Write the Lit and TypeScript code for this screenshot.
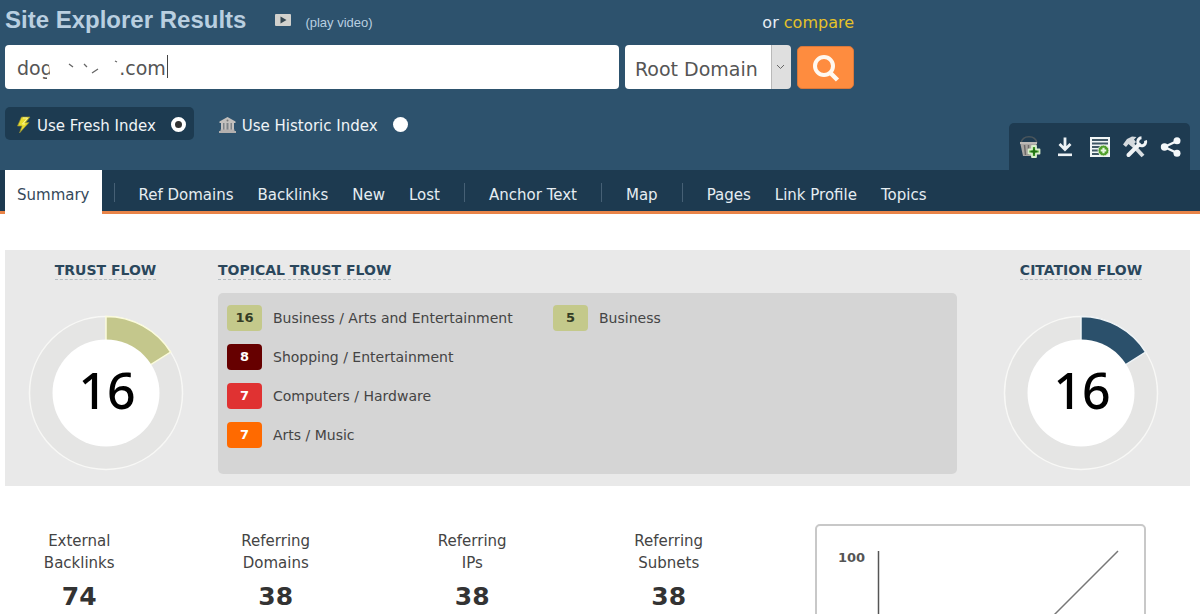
import { LitElement, html, css, svg } from "lit";
import { customElement, property } from "lit/decorators.js";

const topics = [
  { score: 16, name: "Business / Arts and Entertainment", tone: "sage" },
  { score: 8, name: "Shopping / Entertainment", tone: "maroon" },
  { score: 7, name: "Computers / Hardware", tone: "red" },
  { score: 7, name: "Arts / Music", tone: "orange" },
  { score: 5, name: "Business", tone: "sage" },
];

const stats = [
  { top: "External", bottom: "Backlinks", value: 74 },
  { top: "Referring", bottom: "Domains", value: 38 },
  { top: "Referring", bottom: "IPs", value: 38 },
  { top: "Referring", bottom: "Subnets", value: 38 },
];

const tabGroups = [
  ["Summary"],
  ["Ref Domains", "Backlinks", "New", "Lost"],
  ["Anchor Text"],
  ["Map"],
  ["Pages", "Link Profile", "Topics"],
];

const plusBadge = svg`
  <path d="M13 10h4v3.500h3.500v4H17V21h-4v-3.500H9.500v-4H13z" fill="#3f9a25" stroke="#d9efcb" stroke-width="1.800" stroke-linejoin="round"/>
  <path d="M15 12.500v6M12 15.500h6" stroke="#1f6d12" stroke-width="1.600"/>`;

const tools = [
  {
    label: "Add to bucket",
    icon: svg`
      <path d="M2 7C3 2 7 .800 10 .800S17 2 18 7" fill="none" stroke="#4a555c" stroke-width="1.400"/>
      <path d="M1 6h17l-2.500 14H4z" fill="#a9a5a2"/>
      <path d="M1 6h17v2H1z" fill="#bdb9b6"/>
      <path d="M5.500 9l1 10M9.500 9v10M14 9l-.500 5" stroke="#6d6a69" stroke-width="1.500"/>
      ${plusBadge}`,
  },
  {
    label: "Download",
    icon: svg`
      <path d="M11 1.500v11M5.500 8l5.500 5.500L16.500 8" fill="none" stroke="#eef3f6" stroke-width="2.800"/>
      <path d="M4 18.800h14" stroke="#eef3f6" stroke-width="2.600"/>`,
  },
  {
    label: "Create report",
    icon: svg`
      <path d="M1 1h20v20H1z" fill="#f1f5f6"/>
      <path d="M3 4h16M3 7.500h16M3 11h9M3 14.500h7M3 18h7" stroke="#405866" stroke-width="1.800"/>
      <circle cx="14.500" cy="14.500" r="5.400" fill="#4f9f2b" stroke="#d7ebcb"/>
      <path d="M14.500 11.700v5.600M11.700 14.500h5.600" stroke="#e7f5df" stroke-width="2.200"/>`,
  },
  {
    label: "Tools",
    icon: svg`
      <path d="M7 7l12 13" stroke="#d9dee2" stroke-width="4"/>
      <path d="M-1 8.500l4-5.500L8 .500l4.500.500L10 3.500l2 2.500L7.500 10.500 4.500 8 2 11z" fill="#d5dade"/>
      <path d="M15 8.500L4.500 19" stroke="#f1f4f6" stroke-width="4" stroke-linecap="round"/>
      <path d="M21.500 4.500A4 4 0 1 1 17.500 1.800" fill="none" stroke="#f1f4f6" stroke-width="3"/>`,
  },
  {
    label: "Share",
    icon: svg`
      <path d="M19 4.500L5.500 11 19 17.500" fill="none" stroke="#f4f8fa" stroke-width="2.400"/>
      <circle cx="18" cy="4.800" r="3.500" fill="#f4f8fa"/>
      <circle cx="5.500" cy="11" r="3.700" fill="#f4f8fa"/>
      <circle cx="18" cy="17.200" r="3.500" fill="#f4f8fa"/>`,
  },
];

@customElement("flow-dial")
class FlowDial extends LitElement {
  @property({ type: Number }) score = 0;
  @property() color = "#c4c78c";
  @property() edge = "#fbfbdc";

  static styles = css`
    :host { display: block; width: 156px; }
    svg { display: block; width: 100%; }
    text { font: 500 50px "Noto Sans", "Open Sans", sans-serif; text-anchor: middle; }
  `;

  private point(radius: number) {
    const angle = (this.score / 100) * Math.PI * 2;
    return `${78 + radius * Math.sin(angle)} ${78 - radius * Math.cos(angle)}`;
  }

  render() {
    return html`
      <svg viewBox="0 0 156 156" role="img" aria-label="Score ${this.score}">
        <circle cx="78" cy="78" r="76.500" fill="#e5e5e4" stroke="#f8f8f6" stroke-width="1.500"/>
        <path d="M78 1.500A76.500 76.500 0 0 1 ${this.point(76.5)}L78 78Z"
          fill=${this.color} stroke=${this.edge} stroke-width="1.500"/>
        <circle cx="78" cy="78" r="53.500" fill="#fff"/>
        <text x="79" y="94">${this.score}</text>
      </svg>`;
  }
}

@customElement("app-root")
class AppRoot extends LitElement {
  static styles = css`
    :host {
      display: block;
      height: 100vh;
      overflow-y: auto;
      scrollbar-width: none;
      background: #fff;
      color: #444;
      font: 15px/22px "DejaVu Sans", Verdana, sans-serif;
    }
    * { box-sizing: border-box; }
    a { color: inherit; text-decoration: none; }
    h1, h2, p, dl, dd, dt, ul { margin: 0; padding: 0; font-weight: normal; }
    button { border: 0; padding: 0; background: none; cursor: pointer; }
    svg { display: block; overflow: visible; }

    header {
      display: flex;
      justify-content: space-between;
      align-items: flex-end;
      padding: 0 10px 0 5px;
      background: #2d526d;
      color: #f0f4f7;
    }
    .search { flex: 0 1 849px; padding-bottom: 30px; }
    .title-row { display: flex; align-items: center; height: 45px; padding-bottom: 6px; color: #b9cfe0; }
    .title-row h1 { font: bold 24px/30px "Liberation Sans", Arial, sans-serif; }
    .video {
      display: flex;
      align-items: center;
      gap: 13px;
      margin-left: 28px;
      font: 13px/20px "Liberation Sans", Arial, sans-serif;
    }
    .video span { padding-top: 6px; }
    .compare { margin-left: auto; padding-top: 6px; font-size: 16px; color: #e8eff4; }
    .compare a { color: #e6c229; }
    .search-row { display: flex; gap: 6px; height: 44px; }
    .domain { position: relative; flex: 1; }
    .domain input {
      width: 100%;
      height: 44px;
      padding: 2px 12px 0;
      border: 0;
      border-radius: 4px;
      background: #fff;
      color: #555;
      font: 19px "DejaVu Sans", Verdana, sans-serif;
      outline: none;
    }
    .redaction { position: absolute; left: 42px; top: 8px; }
    .scope { position: relative; width: 166px; }
    .scope select {
      appearance: none;
      width: 100%;
      height: 44px;
      padding: 4px 20px 0 10px;
      border: 0;
      border-radius: 4px;
      background: linear-gradient(to left, #dfdfdf 19px, #b9b9b9 19px, #b9b9b9 20px, #fff 20px);
      color: #555;
      font: 19px "DejaVu Sans", Verdana, sans-serif;
    }
    .scope svg { position: absolute; right: 6px; top: 18px; pointer-events: none; }
    .go {
      display: grid;
      place-items: center;
      width: 57px;
      margin-top: 1px;
      border: 1px solid #d9783b;
      border-radius: 5px;
      background: #fe8c3f;
    }
    .indexes { display: flex; gap: 14px; margin-top: 18px; }
    .indexes label {
      display: flex;
      align-items: center;
      height: 33px;
      padding: 5px 8px 0 11px;
      border-radius: 5px;
    }
    .indexes label.on { background: #1d3b51; }
    .indexes svg { margin: 0 6px 2px 0; }
    .indexes input {
      appearance: none;
      width: 15px;
      height: 15px;
      margin: 0 0 3px 15px;
      border-radius: 50%;
      background: #fff;
    }
    .indexes input:checked { border: 4px solid #fff; background: #333; }
    .tools {
      display: flex;
      gap: 11px;
      height: 47px;
      padding: 1px 8px 0 9px;
      border-radius: 5px 5px 0 0;
      background: #1e3b51;
    }
    .tools button { display: grid; place-items: center; width: 24px; }

    nav {
      display: flex;
      height: 44px;
      padding-left: 5px;
      border-bottom: 3px solid #e98448;
      background: #1d3a50;
      color: #e6edf2;
    }
    .group { display: flex; }
    .group + .group::before {
      content: "";
      width: 1px;
      height: 19px;
      margin: 13px 12px 0;
      background: #466075;
    }
    .group a { height: 44px; padding: 14px 12px 0; }
    .group a.active { background: #fff; color: #35495a; }

    .flows {
      display: grid;
      grid-template-columns: 201px 1fr 218px;
      margin: 36px 10px 0 5px;
      padding: 12px 0;
      background: #e9e9e9;
    }
    .flow { display: flex; flex-direction: column; align-items: center; }
    h2 {
      width: fit-content;
      border-bottom: 1px dashed #b4bcc1;
      color: #2a475c;
      font-size: 14px;
      font-weight: bold;
      line-height: 17px;
    }
    flow-dial { margin-top: 35px; }
    .topical { margin: 0 15px 0 12px; }
    .topics {
      display: grid;
      grid-template-rows: repeat(4, 26px);
      grid-auto-flow: column;
      grid-auto-columns: 326px;
      row-gap: 13px;
      margin-top: 13px;
      padding: 12px 9px 26px;
      border-radius: 5px;
      background: #d5d5d5;
      list-style: none;
      font-size: 14px;
    }
    .topics li { display: flex; align-items: center; gap: 11px; white-space: nowrap; }
    .badge {
      width: 35px;
      border-radius: 4px;
      color: #fff;
      font-size: 13px;
      font-weight: bold;
      line-height: 26px;
      text-align: center;
    }
    .sage { background: #c4c98b; color: #343c24; }
    .maroon { background: #660000; }
    .red { background: #e03232; }
    .orange { background: #ff6a00; }

    .lower { display: flex; justify-content: space-between; align-items: flex-start; padding: 38px 54px 0 0; }
    .stats { display: grid; grid-template-columns: repeat(4, 1fr); flex: 0 1 786px; margin: 6px 0 0 -19px; text-align: center; }
    .stats dd { margin-top: 6px; color: #333; font-size: 25px; font-weight: bold; line-height: 34px; }
    .chart { width: 331px; border: 2px solid #c8c8c8; border-radius: 5px; }
    .chart text { font: bold 13px "DejaVu Sans", Verdana, sans-serif; fill: #555; }
  `;

  render() {
    return html`
      <header>
        <form class="search" @submit=${(e: Event) => e.preventDefault()}>
          <div class="title-row">
            <h1>Site Explorer Results</h1>
            <a class="video" href="#video">
              <svg width="18" height="14" viewBox="0 0 18 14">
                <rect x="1" y="1" width="16" height="12" rx="1" fill="#d1d1cd"/>
                <path d="M6.500 3.500L12.500 7l-6 3.500z" fill="#344650"/>
              </svg>
              <span>(play video)</span>
            </a>
            <p class="compare">or <a href="#compare">compare</a></p>
          </div>
          <div class="search-row">
            <div class="domain">
              <input type="text" aria-label="Domain" .value=${"dog" + " ".repeat(11) + ".com"}>
              <svg class="redaction" width="124" height="30" viewBox="0 0 124 30" aria-hidden="true">
                <path d="M4 0H72V30H0V24L3 21 2 12z" fill="#fff"/>
                <path d="M22 11l4 3M37 11l3 3M45 20l6-4M68 8l2 1" stroke="#666" stroke-width="1.300"/>
                <path d="M120.500 2v23" stroke="#444"/>
              </svg>
            </div>
            <div class="scope">
              <select aria-label="Scope"><option>Root Domain</option></select>
              <svg width="9" height="8" viewBox="0 0 9 8"><path d="M1 2l3.500 3.500L8 2" fill="none" stroke="#666"/></svg>
            </div>
            <button class="go" aria-label="Search">
              <svg width="30" height="30" viewBox="0 0 30 30">
                <circle cx="13" cy="13" r="9" fill="none" stroke="#fff8f0" stroke-width="4"/>
                <path d="M19 19.500L26.500 27" stroke="#fff8f0" stroke-width="4.500"/>
              </svg>
            </button>
          </div>
          <div class="indexes">
            <label class="on">
              <svg width="15" height="18" viewBox="0 0 15 18">
                <path d="M5.500 1H14L9.500 6.500H13L3.500 17 6 10H1.500z" fill="#e9dc2d" stroke="#8f8b35" stroke-width=".700"/>
                <path d="M7 2h4.500L6.500 8H9" fill="none" stroke="#fbf59a"/>
              </svg>
              Use Fresh Index
              <input type="radio" name="index" checked>
            </label>
            <label>
              <svg width="17" height="18" viewBox="0 0 17 18">
                <path d="M8.500 1L16.500 5.500V7H.500V5.500z" fill="#c3c0bd"/>
                <path d="M2 7h13v7H2z" fill="#7f8488"/>
                <path d="M3 7v7M6.500 7v7M10.500 7v7M14 7v7" stroke="#c4c1bf" stroke-width="2"/>
                <path d="M1.500 13.500h14V15H17v2H0v-2h1.500z" fill="#b3b0af"/>
                <circle cx="8.500" cy="4.500" r="1" fill="#777"/>
              </svg>
              Use Historic Index
              <input type="radio" name="index">
            </label>
          </div>
        </form>
        <div class="tools">
          ${tools.map((tool) => html`
            <button aria-label=${tool.label}>
              <svg width="22" height="22" viewBox="0 0 22 22">${tool.icon}</svg>
            </button>`)}
        </div>
      </header>
      <nav>
        ${tabGroups.map((group) => html`
          <div class="group">
            ${group.map((tab) => html`<a href="#" class=${tab === "Summary" ? "active" : ""}>${tab}</a>`)}
          </div>`)}
      </nav>
      <main>
        <section class="flows">
          <div class="flow">
            <h2>TRUST FLOW</h2>
            <flow-dial score="16"></flow-dial>
          </div>
          <div class="topical">
            <h2>TOPICAL TRUST FLOW</h2>
            <ul class="topics">
              ${topics.map((topic) => html`
                <li><span class="badge ${topic.tone}">${topic.score}</span>${topic.name}</li>`)}
            </ul>
          </div>
          <div class="flow">
            <h2>CITATION FLOW</h2>
            <flow-dial score="16" color="#2b506b" edge="#eef3f6"></flow-dial>
          </div>
        </section>
        <section class="lower">
          <dl class="stats">
            ${stats.map((stat) => html`
              <div>
                <dt>${stat.top}<br>${stat.bottom}</dt>
                <dd>${stat.value}</dd>
              </div>`)}
          </dl>
          <div class="chart">
            <svg viewBox="0 0 327 327" role="img" aria-label="Flow chart">
              <text x="21" y="36">100</text>
              <path d="M61.500 25V265" stroke="#555" stroke-width="1.500"/>
              <path d="M61 265H301M61 265L301 25" fill="none" stroke="#777" stroke-width="1.500"/>
            </svg>
          </div>
        </section>
      </main>`;
  }
}
